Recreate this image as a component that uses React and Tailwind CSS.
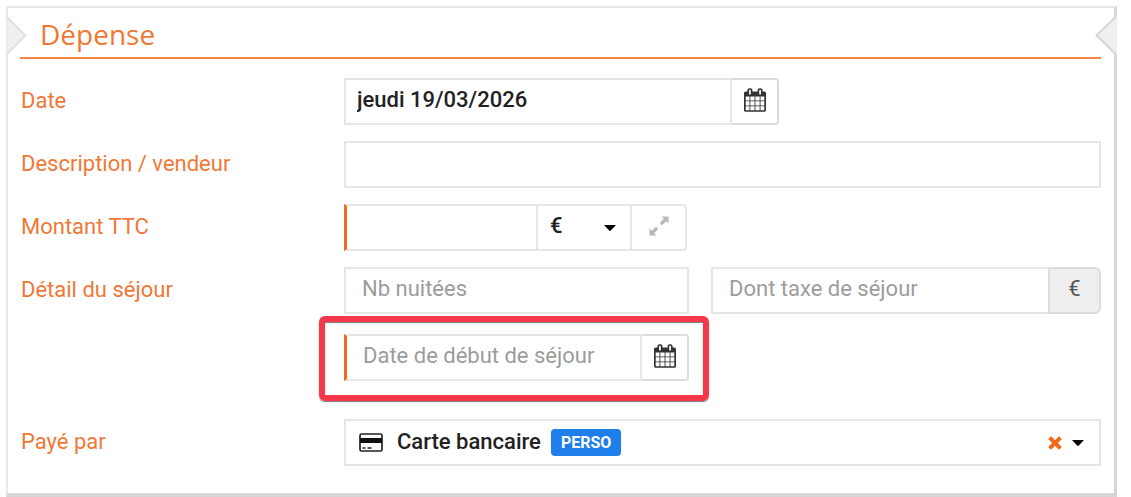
import { useState } from 'react'

const CalendarIcon = () => (
  <svg viewBox="64 0 1664 1792" className="h-6 w-[22px] fill-[#333]" aria-hidden="true">
    <path d="M192 1664h288v-288h-288v288zM544 1664h320v-288h-320v288zM192 1312h288v-320h-288v320zM544 1312h320v-320h-320v320zM192 928h288v-288h-288v288zM928 1664h320v-288h-320v288zM544 928h320v-288h-320v288zM1312 1664h288v-288h-288v288zM928 1312h320v-320h-320v320zM576 448v-288q0-13-9.5-22.5t-22.5-9.5h-64q-13 0-22.5 9.5t-9.5 22.5v288q0 13 9.5 22.5t22.5 9.5h64q13 0 22.5-9.5t9.5-22.5zM1312 1312h288v-320h-288v320zM928 928h320v-288h-320v288zM1312 928h288v-288h-288v288zM1344 448v-288q0-13-9.5-22.5t-22.5-9.5h-64q-13 0-22.5 9.5t-9.5 22.5v288q0 13 9.5 22.5t22.5 9.5h64q13 0 22.5-9.5t9.5-22.5zM1728 384v1280q0 52-38 90t-90 38h-1408q-52 0-90-38t-38-90v-1280q0-52 38-90t90-38h128v-96q0-66 47-113t113-47h64q66 0 113 47t47 113v96h384v-96q0-66 47-113t113-47h64q66 0 113 47t47 113v96h128q52 0 90 38t38 90z" />
  </svg>
)

const ExpandIcon = () => (
  <svg viewBox="0 0 20 20" className="mb-1 size-5 fill-[#b8b8b8]" aria-hidden="true">
    <path d="M12.5 0.5H19.5V7.5L17.2 5.2L13 9.2L10.8 7L14.8 2.8Z" />
    <path d="M7.5 19.5H0.5V12.5L2.8 14.8L7 10.8L9.2 13L5.2 17.2Z" />
  </svg>
)

const CardIcon = () => (
  <svg viewBox="0 0 24 20" className="h-5 w-6" aria-hidden="true">
    <rect x="1" y="1" width="22" height="17" rx="1.5" fill="none" stroke="#222" strokeWidth="1.7" />
    <path d="M1 5h22v5H1z" fill="#111" />
    <path d="M3.5 15h3M8.5 15h4" stroke="#222" strokeWidth="1.5" />
  </svg>
)

const Caret = () => (
  <svg viewBox="0 0 12 6" className="h-1.5 w-3 fill-black" aria-hidden="true">
    <path d="M0 0H12L6.8 5.6Q6 6.3 5.2 5.6Z" />
  </svg>
)

const CrossIcon = () => (
  <svg viewBox="0 0 14 14" className="size-3.5" aria-hidden="true">
    <path d="M3 3L11 11M11 3L3 11" stroke="#f26a1b" strokeWidth="4" strokeLinecap="square" />
  </svg>
)

const box = 'h-[47px] min-w-0 border-2 border-[#e6e6e6] bg-white outline-none'
const field = `${box} px-4 pb-1 placeholder:text-[#9c9c9c]`
const calendarButton = 'flex h-[47px] w-[47px] shrink-0 items-center justify-center rounded-r border-2 border-l-0 border-[#dcdcdc] bg-white pb-1'

const Row = ({ label, htmlFor, children }) => (
  <div className="flex">
    <label htmlFor={htmlFor} className="h-[47px] w-[324px] shrink-0 pl-px leading-[45px] text-[#f07836]">{label}</label>
    <div className="min-w-0 flex-1">{children}</div>
  </div>
)

const App = () => {
  const [date, setDate] = useState('jeudi 19/03/2026')
  const [currency, setCurrency] = useState('EUR')

  return (
    <main className="bg-white pt-1.5 pr-3.5 pl-1.5 font-['Roboto',sans-serif] text-[22px] text-[#222]">
      <form className="relative border-t-2 border-r-3 border-b-4 border-l-2 border-t-[#e8e8e8] border-r-[#d6d6d6] border-b-[#d6d6d6] border-l-[#e8e8e8] pr-[13px] pb-[27px] pl-3">
        {/* Previous / next notches */}
        <svg viewBox="0 0 20 40" className="absolute top-2 -left-px h-10 w-5" aria-hidden="true">
          <path d="M0 1L18.5 19.5L0 38" fill="#efefef" stroke="#e2e2e2" strokeWidth="2" />
        </svg>
        <svg viewBox="0 0 22 40" className="absolute top-2 -right-[3px] h-10 w-[22px]" aria-hidden="true">
          <path d="M22 0L20.5 1L1.5 19.5L20.5 38L22 39" fill="#efefef" />
          <path d="M20.5 1L1.5 19.5L20.5 38" fill="none" stroke="#d6d6d6" strokeWidth="2" />
        </svg>

        <h1 className="h-[51px] border-b-2 border-[#f58545] pl-5 font-['Open_Sans',sans-serif] text-[28px] leading-[52px] text-[#f07836]">
          Dépense
        </h1>

        <div className="mt-[19px] flex flex-col gap-4">
          <Row label="Date" htmlFor="date">
            <div className="flex w-[435px]">
              <input id="date" value={date} onChange={e => setDate(e.target.value)}
                className={`${box} flex-1 px-[11px] pb-1 font-medium`} />
              <button type="button" aria-label="Choisir la date" className={calendarButton}><CalendarIcon /></button>
            </div>
          </Row>

          <Row label="Description / vendeur" htmlFor="description">
            <input id="description" className={`${field} w-full`} />
          </Row>

          <Row label="Montant TTC" htmlFor="montant">
            <div className="flex w-[343px]">
              <input id="montant" className={`${field} flex-1 border-l-3 border-l-[#f26a1b]`} />
              <div className="relative w-[94px] shrink-0">
                <select aria-label="Devise" value={currency} onChange={e => setCurrency(e.target.value)}
                  className={`${box} w-full appearance-none border-l-0 pb-1 pl-3 font-medium`}>
                  <option value="EUR">€</option>
                  <option value="USD">$</option>
                </select>
                <span className="pointer-events-none absolute inset-y-0 right-4 flex items-center"><Caret /></span>
              </div>
              <button type="button" aria-label="Détailler le montant" className={`${box} flex w-[55px] shrink-0 items-center justify-center rounded-r border-l-0`}>
                <ExpandIcon />
              </button>
            </div>
          </Row>

          <Row label="Détail du séjour" htmlFor="nuitees">
            <div className="flex gap-[22px]">
              <input id="nuitees" placeholder="Nb nuitées" className={`${field} w-[345px] shrink-0`} />
              <div className="flex min-w-0 flex-1">
                <input aria-label="Dont taxe de séjour" placeholder="Dont taxe de séjour" className={`${field} flex-1 border-r-0`} />
                <span className="flex h-[47px] w-[53px] shrink-0 items-center justify-center rounded-r-md border-2 border-[#dcdcdc] bg-[#eee] pb-1 text-[#555]">€</span>
              </div>
            </div>
            <div className="relative mt-5 mb-[22px] flex w-[345px]">
              <input aria-label="Date de début de séjour" placeholder="Date de début de séjour"
                className={`${field} flex-1 border-l-3 border-l-[#f26a1b]`} />
              <button type="button" aria-label="Choisir la date de début" className={calendarButton}><CalendarIcon /></button>
              <div className="pointer-events-none absolute -top-[18px] -right-5 -bottom-5 -left-[25px] rounded-md border-6 border-[#f5384a] shadow-[0_1px_1px_#777,inset_0_1px_1px_#777]" />
            </div>
          </Row>

          <Row label="Payé par" htmlFor="paiement">
            <div className={`${box} flex items-center pr-[15px] pl-[13px]`}>
              <button id="paiement" type="button" aria-haspopup="listbox" className="flex flex-1 items-center text-left font-medium">
                <CardIcon />
                <span className="ml-3.5 pb-0.5">Carte bancaire</span>
                <span className="ml-2.5 flex h-[27px] items-center rounded bg-[#1f7fe8] px-2.5 text-base font-bold text-white">PERSO</span>
              </button>
              <button type="button" aria-label="Effacer"><CrossIcon /></button>
              <button type="button" aria-label="Ouvrir la liste" className="ml-2.5"><Caret /></button>
            </div>
          </Row>
        </div>
      </form>
    </main>
  )
}

export default App
